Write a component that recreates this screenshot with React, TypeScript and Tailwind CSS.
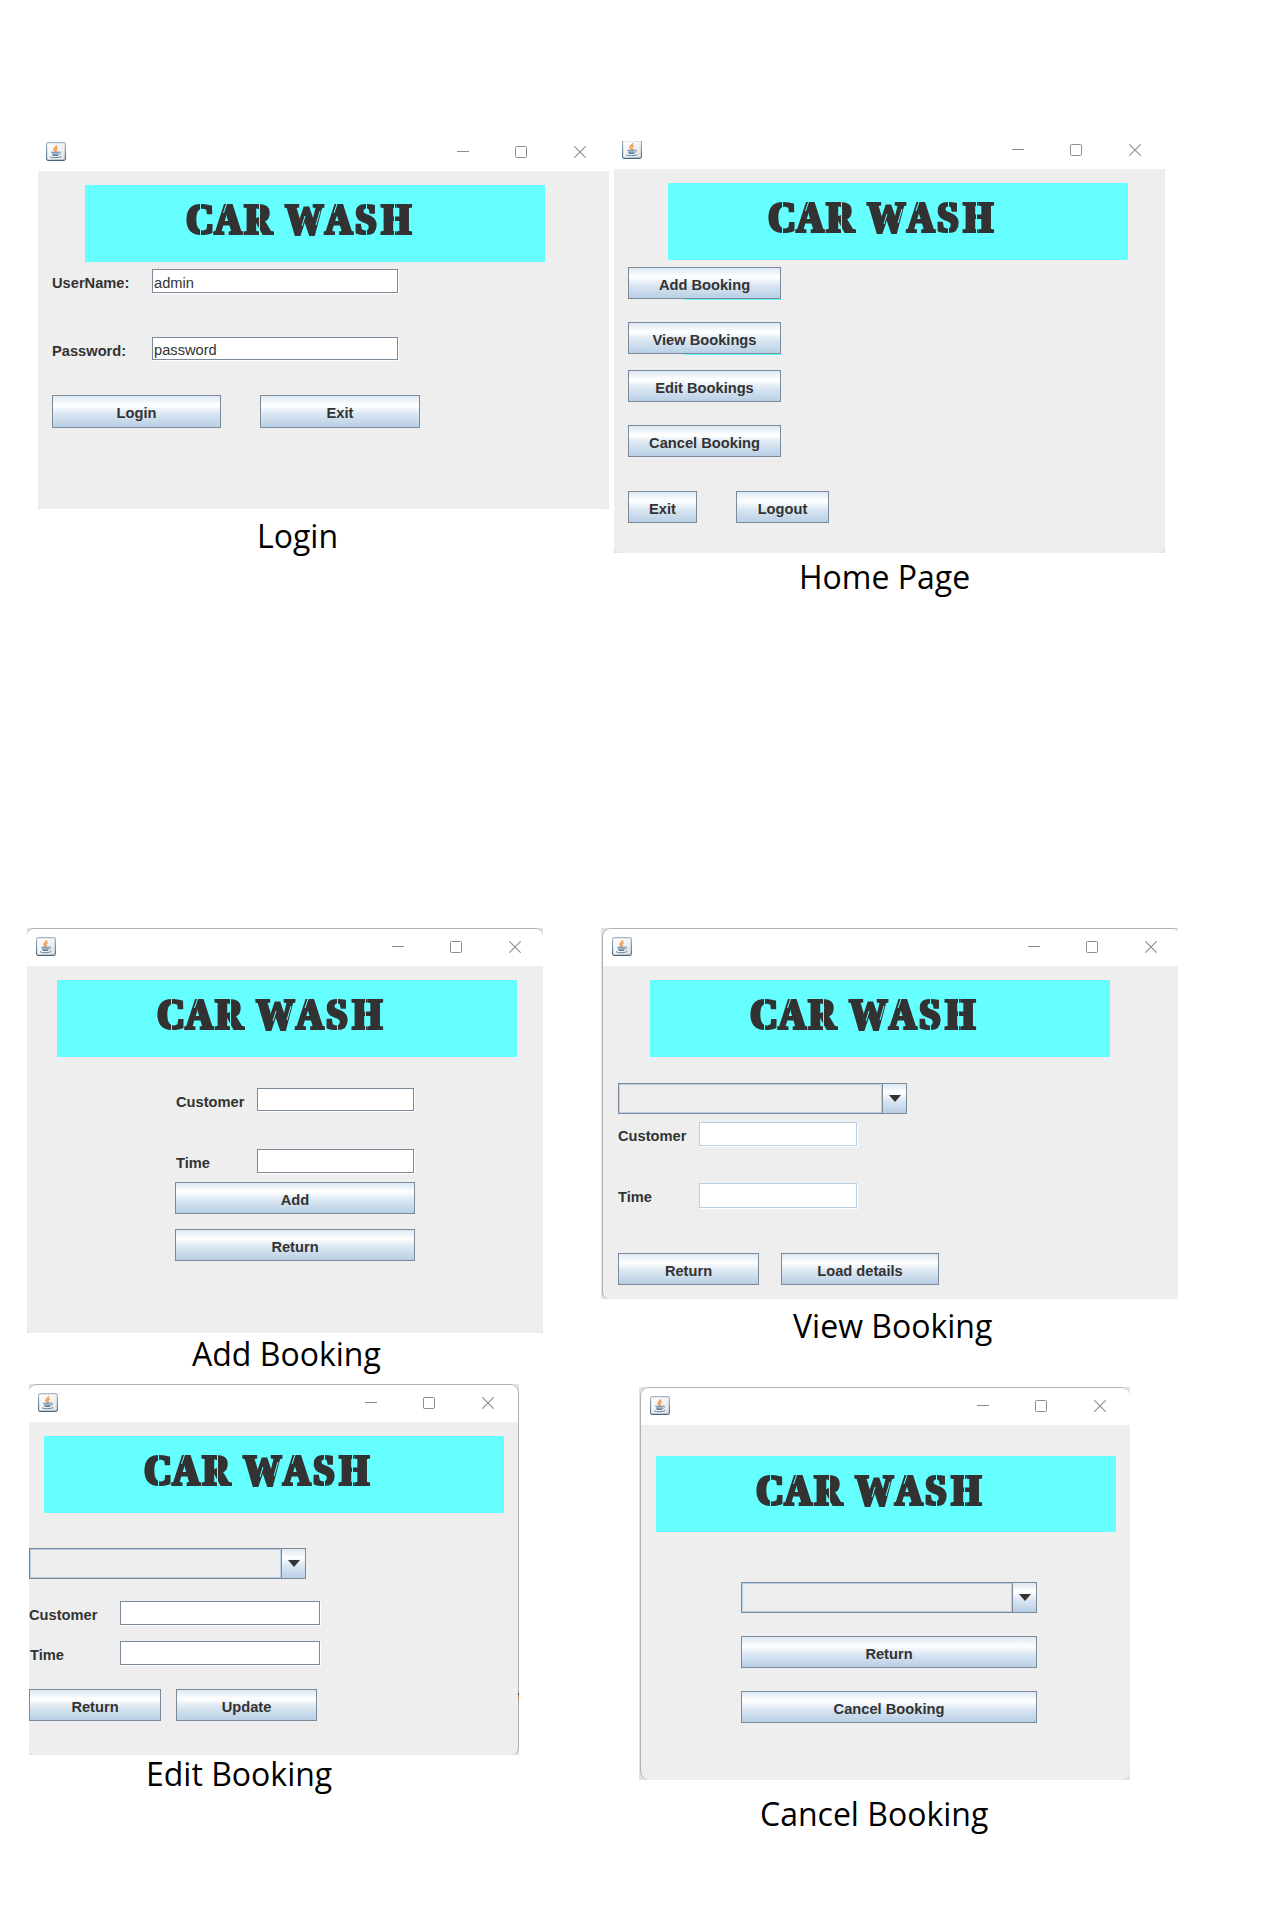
import type { ReactNode } from "react";

function JavaIcon() {
  return (
    <svg width="20" height="19" viewBox="0 0 20 19" className="block shrink-0">
      <defs>
        <linearGradient id="javaEdge" x1="0" y1="0" x2="0" y2="1">
          <stop offset="0" stopColor="#a3b8cb" />
          <stop offset="1" stopColor="#45637c" />
        </linearGradient>
        <linearGradient id="javaFace" x1="0" y1="0" x2="1" y2="1">
          <stop offset="0" stopColor="#ffffff" />
          <stop offset="0.5" stopColor="#f3f3f3" />
          <stop offset="1" stopColor="#d9dcde" />
        </linearGradient>
      </defs>
      <rect x="0.6" y="0.6" width="18.8" height="17.8" rx="1.6" fill="url(#javaFace)" stroke="url(#javaEdge)" strokeWidth="1.1" />
      <path d="M10.6 3.2c.6 1.500-2.900 2.300-2.700 4 .1.900 1 1.500 1.700 2.300M11.900 5.600c-1.500.5-2.200 1.100-1.900 2 .3.700.5 1.100-.1 1.900" fill="none" stroke="#ee8f3c" strokeWidth="1.300" />
      <path d="M5.200 10.200h8M6 12.100h6.600M6.700 13.500h5.300" fill="none" stroke="#5b7f9d" strokeWidth="1.100" />
      <path d="M13 10c2.100-.5 2.500 1.700-.4 2.500" fill="none" stroke="#7d99b0" strokeWidth="1" />
      <path d="M4 14.800c2 1.300 9 1.200 11.200-.3" fill="none" stroke="#6585a0" strokeWidth="1" />
    </svg>
  );
}

function WindowControls() {
  return (
    <div className="flex text-[#8d8d8d]">
      <svg width="12" height="12" className="mr-[46px] block">
        <path d="M0 5.500h12" stroke="currentColor" />
      </svg>
      <svg width="12" height="12" className="mr-[47px] block" fill="none">
        <rect x="0.500" y="0.500" width="11" height="11" rx="1" stroke="currentColor" />
      </svg>
      <svg width="12" height="12" className="block">
        <path d="M0.300 0.300l11.400 11.400M11.700 0.300l-11.400 11.400" stroke="currentColor" strokeWidth="1.100" />
      </svg>
    </div>
  );
}

function TitleBar({ className }: { className: string }) {
  return (
    <div className={`flex items-start justify-between bg-white ${className}`}>
      <JavaIcon />
      <div className="mt-1">
        <WindowControls />
      </div>
    </div>
  );
}

function Banner({ className }: { className: string }) {
  return (
    <div className={`w-[460px] shrink-0 bg-[#66ffff] ${className}`}>
      <svg width="459" height="76" className="block">
        <defs>
          <filter id="heavy" x="-5%" y="-10%" width="110%" height="120%">
            <feMorphology operator="dilate" radius="1 0" />
          </filter>
        </defs>
        <g filter="url(#heavy)">
          <text
            transform="translate(-0.800 48.800) scale(0.840 1)"
            x="120.700 154.200 190 225 238.900 285.800 321.800 353"
            fontFamily="'Liberation Serif', serif"
            fontWeight="700"
            fontSize="44.500"
            fill="#333333"
            stroke="#333333"
            strokeWidth="2.200"
            xmlSpace="preserve"
          >
            CAR WASH
          </text>
        </g>
        {/* stencil bridges */}
        <g stroke="#66ffff" strokeWidth="1" fill="none">
          <path d="M114.500 17v35" />
          <path d="M140.500 19l-3 9M251 19l-3 9" />
          <path d="M173.500 17v34" />
          <path d="M219 31l-3 10M234 26l-4 14" />
          <path d="M280.500 17v8M280.500 43v9" />
          <path d="M308.500 18v33" />
        </g>
      </svg>
    </div>
  );
}

function Button({ children, className }: { children: string; className: string }) {
  return (
    <button
      type="button"
      className={`flex shrink-0 items-center justify-center whitespace-nowrap border border-[#7a8a99] bg-[linear-gradient(180deg,#dde8f3_0%,#ffffff_30%,#dde8f3_55%,#b8cfe5_100%)] pt-1 text-[14.670px] font-bold leading-none text-[#333] ${className}`}
    >
      {children}
    </button>
  );
}

function Field({ value, className, disabled = false }: { value?: string; className: string; disabled?: boolean }) {
  return (
    <div
      className={`flex shrink-0 items-center border bg-white pl-[1px] pt-1 text-[14.670px] leading-none text-[#333] shadow-[1px_1px_0_#fff] ${disabled ? "border-[#b8cfe5]" : "border-[#7a8a99]"} ${className}`}
    >
      {value}
    </div>
  );
}

function Label({ children, className }: { children: string; className: string }) {
  return <span className={`block h-5 shrink-0 whitespace-nowrap text-[14.670px] font-bold leading-5 text-[#333] ${className}`}>{children}</span>;
}

function Combo({ className }: { className: string }) {
  return (
    <div className={`flex h-[31px] shrink-0 border border-[#7a8a99] ${className}`}>
      <div className="flex-1 border border-[#b8cfe5]" />
      <div className="flex w-6 items-center justify-center border-l border-[#7a8a99] bg-[linear-gradient(180deg,#dde8f3_0%,#ffffff_30%,#dde8f3_55%,#b8cfe5_100%)]">
        <svg width="12" height="7" className="block">
          <path d="M0 0h12l-6 7z" fill="#333" />
        </svg>
      </div>
    </div>
  );
}

function Frame({ className, edge, children }: { className: string; edge: string; children: ReactNode }) {
  return (
    <div className={`bg-[#e2e2e2] ${className}`}>
      <div className={`flex h-full flex-col overflow-hidden border-[#b0b0b0] bg-[#eeeeee] ${edge}`}>{children}</div>
    </div>
  );
}

function Caption({ children, className }: { children: string; className: string }) {
  return (
    <figcaption className={`whitespace-nowrap font-['Open_Sans',sans-serif] text-[32px] leading-10 text-black ${className}`}>
      {children}
    </figcaption>
  );
}

export default function App() {
  return (
    <main className="h-[1932px] w-[1268px] overflow-hidden bg-white pt-[140px] font-['Liberation_Sans',Arial,sans-serif]">
      <section className="flex h-[788px] items-start">
        <figure className="ml-[38px] w-[571px]">
          <Frame className="h-[369px]" edge="rounded-b-[4px]">
            <TitleBar className="h-[31px] shrink-0 pl-2 pr-[23px] pt-[2px]" />
            <Banner className="ml-[47px] mt-[14px] h-[77px] pl-px" />
            <div className="ml-[14px] mt-[7px] flex items-start">
              <Label className="mt-1 w-[100px]">UserName:</Label>
              <Field className="h-6 w-[246px]" value="admin" />
            </div>
            <div className="ml-[14px] mt-[44px] flex items-start">
              <Label className="mt-1 w-[100px]">Password:</Label>
              <Field className="h-[23px] w-[246px]" value="password" />
            </div>
            <div className="ml-[14px] mt-[34px] flex gap-[39px]">
              <Button className="h-[33px] w-[169px]">Login</Button>
              <Button className="h-[33px] w-[160px]">Exit</Button>
            </div>
          </Frame>
          <Caption className="ml-[219px] mt-[7px]">Login</Caption>
        </figure>

        <figure className="ml-[5px] mt-[1px] w-[551px]">
          <Frame className="h-[412px]" edge="rounded-b-[7px]">
            <TitleBar className="h-[28px] shrink-0 pl-2 pr-6 [&>*]:-mt-[1px] [&>div]:mt-[3px]" />
            <Banner className="ml-[54px] mt-[14px] h-[77px]" />
            <div className="ml-[14px] mt-[7px] flex flex-col">
              <Button className="h-8 w-[153px]">Add Booking</Button>
              <div className="ml-[55px] h-px w-[98px] bg-[#66ffff]" />
              <Button className="mt-[22px] h-8 w-[153px]">View Bookings</Button>
              <div className="ml-[55px] h-px w-[98px] bg-[#66ffff]" />
              <Button className="mt-[15px] h-8 w-[153px]">Edit Bookings</Button>
              <Button className="mt-[23px] h-8 w-[153px]">Cancel Booking</Button>
              <div className="mt-[34px] flex gap-[39px]">
                <Button className="h-8 w-[69px]">Exit</Button>
                <Button className="h-8 w-[93px]">Logout</Button>
              </div>
            </div>
          </Frame>
          <Caption className="ml-[185px] mt-[4px]">Home Page</Caption>
        </figure>
      </section>

      <section className="flex h-[456px] items-start">
        <figure className="ml-[27px] w-[516px]">
          <Frame className="h-[405px]" edge="rounded-t-[8px] rounded-b-[5px] border-t">
            <TitleBar className="h-[37px] shrink-0 pl-[9px] pr-[22px] pt-2" />
            <Banner className="ml-[30px] mt-[14px] h-[77px]" />
            <div className="ml-[149px] mt-[31px] flex items-start">
              <Label className="mt-1 w-[68px]">Customer</Label>
              <Field className="ml-[13px] h-[23px] w-[157px]" />
            </div>
            <div className="ml-[149px] mt-[37px] flex items-start">
              <Label className="mt-1 w-[33px]">Time</Label>
              <Field className="ml-[48px] h-6 w-[157px]" />
            </div>
            <Button className="ml-[148px] mt-[9px] h-8 w-[240px]">Add</Button>
            <Button className="ml-[148px] mt-[15px] h-8 w-[240px]">Return</Button>
          </Frame>
          <Caption className="ml-[165px] mt-[1px]">Add Booking</Caption>
        </figure>

        <figure className="ml-[58px] w-[577px]">
          <Frame className="h-[371px] pl-[1px]" edge="rounded-tl-[9px] rounded-tr-[5px] rounded-bl-[7px] border-l border-t">
            <TitleBar className="h-[37px] shrink-0 pl-[9px] pr-[21px] pt-2" />
            <Banner className="ml-[47px] mt-[14px] h-[77px]" />
            <Combo className="ml-[15px] mt-[26px] w-[289px]" />
            <div className="ml-[15px] mt-[8px] flex items-start">
              <Label className="mt-1 w-[68px]">Customer</Label>
              <Field className="ml-[13px] h-6 w-[158px]" disabled />
            </div>
            <div className="ml-[15px] mt-[37px] flex items-start">
              <Label className="mt-1 w-[33px]">Time</Label>
              <Field className="ml-[48px] h-[25px] w-[158px]" disabled />
            </div>
            <div className="ml-[15px] mt-[45px] flex gap-[22px]">
              <Button className="h-8 w-[141px]">Return</Button>
              <Button className="h-8 w-[158px]">Load details</Button>
            </div>
          </Frame>
          <Caption className="ml-[192px] mt-[7px]">View Booking</Caption>
        </figure>
      </section>

      <section className="flex items-start">
        <figure className="ml-[29px] w-[490px]">
          <Frame className="relative h-[371px]" edge="rounded-tl-[8px] rounded-tr-[9px] rounded-br-[7px] rounded-bl-[5px] border-r border-t">
            <TitleBar className="h-[37px] shrink-0 pl-[9px] pr-[24px] pt-2" />
            <Banner className="ml-[15px] mt-[14px] h-[77px]" />
            <Combo className="mt-[35px] w-[277px]" />
            <div className="mt-[22px] flex items-start">
              <Label className="mt-1 w-[68px]">Customer</Label>
              <Field className="ml-[23px] h-6 w-[200px]" />
            </div>
            <div className="mt-4 flex items-start">
              <Label className="mt-1 w-[34px] pl-[1px]">Time</Label>
              <Field className="ml-[57px] h-6 w-[200px]" />
            </div>
            <div className="mt-6 flex gap-[15px]">
              <Button className="h-8 w-[132px]">Return</Button>
              <Button className="h-8 w-[141px]">Update</Button>
            </div>
            <div className="absolute right-0 top-[309px] h-2 w-px border-t-2 border-[#333] bg-[#c08a50]" />
          </Frame>
          <Caption className="-mt-[1px] ml-[117px]">Edit Booking</Caption>
        </figure>

        <figure className="ml-[120px] mt-[3px] w-[491px]">
          <Frame className="h-[393px] pl-[1px]" edge="rounded-[9px] border-l border-t border-r-0">
            <TitleBar className="h-[37px] shrink-0 pl-[9px] pr-[24px] pt-2" />
            <Banner className="ml-[15px] mt-[31px] h-[76px]" />
            <Combo className="ml-[100px] mt-[50px] w-[296px]" />
            <Button className="ml-[100px] mt-[23px] h-8 w-[296px]">Return</Button>
            <Button className="ml-[100px] mt-[23px] h-8 w-[296px]">Cancel Booking</Button>
          </Frame>
          <Caption className="ml-[121px] mt-[14px]">Cancel Booking</Caption>
        </figure>
      </section>
    </main>
  );
}
